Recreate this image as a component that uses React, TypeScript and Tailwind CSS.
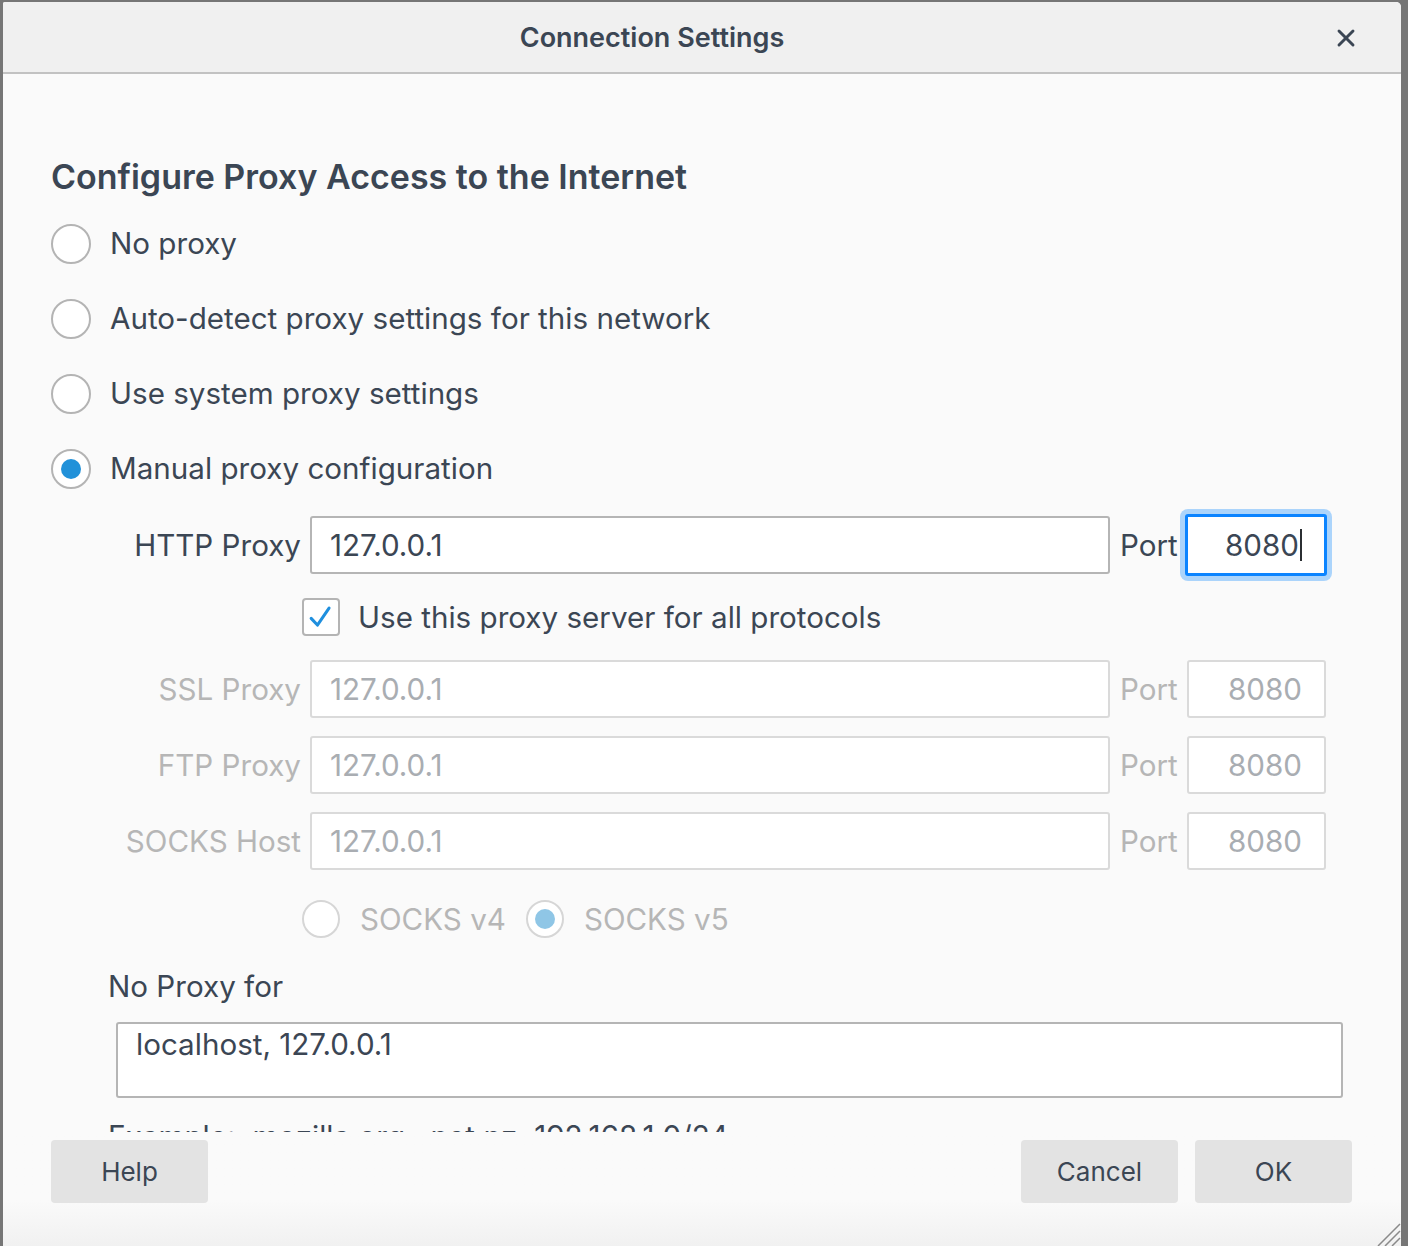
import { X } from "lucide-react";

function Radio({ checked, disabled, size = 40 }: { checked?: boolean; disabled?: boolean; size?: number }) {
  return (
    <div
      className={`flex shrink-0 items-center justify-center rounded-full border-2 bg-white ${disabled ? "border-[#d6d6d6]" : "border-[#b4b4b4]"}`}
      style={{ width: size, height: size }}
    >
      {checked && <div className={`w-[20px] h-[20px] rounded-full ${disabled ? "bg-[#8fc6e6]" : "bg-[#2191d9]"}`} />}
    </div>
  );
}

function RadioRow({ label, checked }: { label: string; checked?: boolean }) {
  return (
    <div className="flex h-[75px] items-center gap-[19px]">
      <Radio checked={checked} />
      <span className="text-[29.6px] text-[#3b4654]">{label}</span>
    </div>
  );
}

function ProxyRow({ label, value, port, disabled, focused, className = "" }: {
  label: string;
  value: string;
  port: string;
  disabled?: boolean;
  focused?: boolean;
  className?: string;
}) {
  const labelColor = disabled ? "text-[#b6b6b6]" : "text-[#3b4654]";
  const valueColor = disabled ? "text-[#a9adb2]" : "text-[#3b4654]";
  const border = disabled ? "border-[#dadada]" : "border-[#b5b5b5]";
  return (
    <div className={`flex h-[58px] items-center ${className}`}>
      <div className={`w-[193px] whitespace-nowrap text-right text-[29.6px] ${labelColor}`}>{label}</div>
      <div className={`ml-[9px] flex h-[58px] w-[800px] items-center rounded-[3px] border-2 bg-white pl-[18px] text-[29.6px] ${border} ${valueColor}`}>
        {value}
      </div>
      <div className={`ml-[10px] w-[58px] text-[29.6px] ${labelColor}`}>Port</div>
      {focused ? (
        <div className="ml-[2px] rounded-[8px] bg-[#abd4fb] p-[5px]">
          <div className="flex h-[62px] w-[142px] items-center justify-end rounded-[3px] border-[3px] border-[#0b84ff] bg-white pr-[22px] text-[29.6px] text-[#3b4654]">
            {port}
            <span className="ml-[1px] h-[32px] w-[2px] bg-[#2b2f33]" />
          </div>
        </div>
      ) : (
        <div className={`ml-[9px] flex h-[58px] w-[139px] items-center justify-end rounded-[3px] border-2 bg-white pr-[22px] text-[29.6px] ${border} ${valueColor}`}>
          {port}
        </div>
      )}
    </div>
  );
}

export default function App() {
  return (
    <div className="h-[1246px] w-[1408px] overflow-hidden bg-[#767676] pl-[3px] pr-[7px] pt-[2px] font-[Inter,sans-serif]">
      <div className="flex h-[1244px] flex-col overflow-hidden rounded-tr-[5px] rounded-tl-[2px] bg-[#fafafa]">
        {/* header */}
        <div className="relative flex h-[72px] shrink-0 items-center justify-center border-b-2 border-[#c2c2c2] bg-[#f0f0f0] pr-[100px] pt-[3px]">
          <span className="text-[27px] font-semibold text-[#3b4654]">Connection Settings</span>
          <X className="absolute right-[41px] top-[22px] h-[28px] w-[28px] text-[#3b4654]" strokeWidth={2.5} />
        </div>

        {/* body */}
        <div className="h-[1058px] shrink-0 overflow-hidden pl-[48px] pr-[58px] pt-[78px]">
          <div className="flex h-[48px] items-center text-[34px] font-semibold text-[#3b4654]">
            Configure Proxy Access to the Internet
          </div>
          <div className="mt-[6px]">
            <RadioRow label="No proxy" />
            <RadioRow label="Auto-detect proxy settings for this network" />
            <RadioRow label="Use system proxy settings" />
            <RadioRow label="Manual proxy configuration" checked />
          </div>

          <div className="ml-[57px]">
            <ProxyRow className="mt-[10px]" label="HTTP Proxy" value="127.0.0.1" port="8080" focused />

            <div className="mt-[24px] flex h-[38px] items-center pl-[194px]">
              <div className="flex h-[38px] w-[38px] items-center justify-center rounded-[4px] border-2 border-[#b4b4b4] bg-white">
                <svg viewBox="0 0 38 38" className="h-[38px] w-[38px]">
                  <path d="M8 20.5 L15 28 L28 9" fill="none" stroke="#1f8fde" strokeWidth="3.4" strokeLinecap="round" strokeLinejoin="round" />
                </svg>
              </div>
              <span className="ml-[18px] text-[29.6px] text-[#3b4654]">Use this proxy server for all protocols</span>
            </div>

            <ProxyRow className="mt-[24px]" label="SSL Proxy" value="127.0.0.1" port="8080" disabled />
            <ProxyRow className="mt-[18px]" label="FTP Proxy" value="127.0.0.1" port="8080" disabled />
            <ProxyRow className="mt-[18px]" label="SOCKS Host" value="127.0.0.1" port="8080" disabled />

            <div className="mt-[30px] flex h-[38px] items-center pl-[194px] text-[29.6px] text-[#b6b6b6]">
              <Radio disabled size={38} />
              <span className="ml-[20px]">SOCKS v4</span>
              <div className="ml-[20px]">
                <Radio disabled checked size={38} />
              </div>
              <span className="ml-[20px]">SOCKS v5</span>
            </div>

            <div className="mt-[30px] flex h-[36px] items-center text-[29.6px] text-[#3b4654]">No Proxy for</div>

            <div className="ml-[8px] mt-[18px] h-[76px] rounded-[3px] border-2 border-[#b5b5b5] bg-white px-[18px] pt-[2px] text-[29.6px] leading-[36px] text-[#3b4654]">
              localhost, 127.0.0.1
            </div>

            <div className="mt-[20px] flex h-[36px] items-center text-[29.6px] text-[#3b4654]">
              Example: .mozilla.org, .net.nz, 192.168.1.0/24
            </div>
          </div>
        </div>

        {/* footer */}
        <div className="flex flex-1 items-start justify-between bg-gradient-to-b from-[#fafafa] from-60% to-[#f1f1f1] pl-[48px] pr-[49px] pt-[8px]">
          <button className="h-[63px] w-[157px] rounded-[4px] bg-[#e3e3e3] text-[26px] text-[#3b4654]">Help</button>
          <div className="flex gap-[17px]">
            <button className="h-[63px] w-[157px] rounded-[4px] bg-[#e3e3e3] text-[26px] text-[#3b4654]">Cancel</button>
            <button className="h-[63px] w-[157px] rounded-[4px] bg-[#e3e3e3] text-[26px] text-[#3b4654]">OK</button>
          </div>
        </div>
      </div>
      <svg className="pointer-events-none absolute left-[1376px] top-[1222px]" width="26" height="24" viewBox="0 0 26 24">
        <path d="M2 24 L24 2 M9 24 L24 9 M16 24 L24 16" stroke="#8a8a8a" strokeWidth="1.5" />
      </svg>
    </div>
  );
}
